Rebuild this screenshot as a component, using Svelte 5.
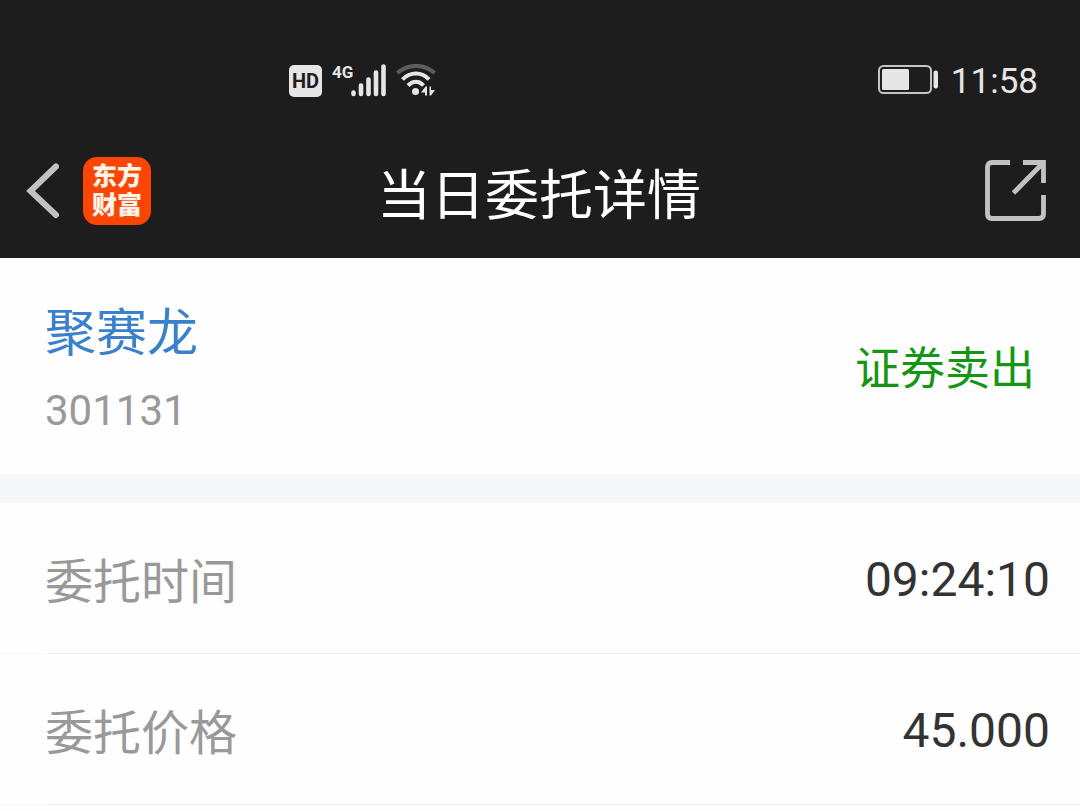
<script>
    let stock = { name: "聚赛龙", code: "301131", action: "证券卖出" };

    let rows = [
        { label: "委托时间", value: "09:24:10" },
        { label: "委托价格", value: "45.000" },
    ];
</script>

<svelte:head>
    <title>当日委托详情</title>
</svelte:head>

<header>
    <div class="status">
        <div class="signals">
            <span class="hd">HD</span>
            <span class="network">4G</span>
            <svg class="bars" width="36" height="34" viewBox="0 0 36 34" aria-hidden="true">
                <g stroke="#e6e6e6" stroke-width="4.600" stroke-linecap="round">
                    <path d="M2.500 28.500v1.500M10 21.500v8.500M17.500 15.500v14.500M25 8.500v21.500M32.500 2.500v27.500" />
                </g>
            </svg>
            <svg class="wifi" width="40" height="34" viewBox="0 0 40 34" aria-hidden="true">
                <g fill="none" stroke-width="4">
                    <path d="M1.500 9C12 -.5 28 -.5 38.500 9" stroke="#5c5c5c" />
                    <path d="M6.500 15.500C14 7.500 26 7.500 33 15.500" stroke="#e6e6e6" />
                    <path d="M12 21.500C17 16.500 23 16.500 27.500 21.500" stroke="#e6e6e6" />
                </g>
                <circle cx="19.500" cy="27.500" r="3.500" fill="#e6e6e6" />
                <path d="M25 28.500 29.500 22.500H31V31.500H29V28.500zM33.500 22.500H35V26H39L35 31.500H33.500z" fill="#e6e6e6" />
            </svg>
        </div>
        <div class="power">
            <svg width="62" height="32" viewBox="0 0 62 32" aria-hidden="true">
                <rect x="1" y="1" width="52" height="27" rx="4.500" fill="none" stroke="#c4c4c4" stroke-width="2" />
                <rect x="4" y="4" width="27" height="21" rx="1.500" fill="#e6e6e6" />
                <rect x="55.500" y="5.500" width="4.500" height="18" rx="2" fill="#e6e6e6" />
            </svg>
            <time>11:58</time>
        </div>
    </div>

    <nav>
        <div class="left">
            <button aria-label="返回">
                <svg width="34" height="56" viewBox="0 0 34 56" aria-hidden="true">
                    <path d="M31 3.500 5.500 28 31 52" fill="none" stroke="#c2c2c2" stroke-width="6" stroke-linecap="round" />
                </svg>
            </button>
            <span class="logo">东方<br />财富</span>
        </div>
        <h1>当日委托详情</h1>
        <button class="share" aria-label="分享">
            <svg width="62" height="62" viewBox="0 0 62 62" aria-hidden="true">
                <g fill="none" stroke="#c2c2c2" stroke-width="4.800">
                    <path d="M25 2.500H7Q2.500 2.500 2.500 7V54Q2.500 58.500 7 58.500H54Q58.500 58.500 58.500 54V35" />
                    <path d="M38 2.500H58.500V23M58 3 28.500 33" />
                </g>
            </svg>
        </button>
    </nav>
</header>

<main>
    <section class="stock">
        <div>
            <h2>{stock.name}</h2>
            <p class="code">{stock.code}</p>
        </div>
        <p class="action">{stock.action}</p>
    </section>

    <dl>
        {#each rows as row}
            <div class="row">
                <dt>{row.label}</dt>
                <dd>{row.value}</dd>
            </div>
        {/each}
    </dl>
</main>

<style>
    :global(body) {
        background: #fefefe;
        font-family: Roboto, "Noto Sans CJK SC", sans-serif;
    }

    h1, h2, p, dl, dd {
        margin: 0;
        font-weight: 400;
    }

    svg {
        display: block;
    }

    button {
        padding: 0;
        border: 0;
        background: none;
        cursor: pointer;
    }

    header {
        background: #1d1d1d;
        color: #fff;
    }

    .status {
        display: flex;
        align-items: center;
        justify-content: space-between;
        height: 86px;
        padding: 38px 42px 0 289px;
        color: #e6e6e6;
    }

    .signals, .power, .left {
        display: flex;
        align-items: center;
    }

    .hd {
        width: 33px;
        border-radius: 5px;
        background: #e6e6e6;
        color: #1d1d1d;
        font-size: 20px;
        font-weight: 700;
        line-height: 32px;
        text-align: center;
    }

    .network {
        align-self: flex-start;
        width: 19px;
        margin-left: 10px;
        font-size: 17px;
        font-weight: 700;
        line-height: 16px;
    }

    .wifi {
        margin-left: 9px;
    }

    .power {
        gap: 11px;
    }

    time {
        padding-top: 2px;
        font-size: 35px;
        line-height: 40px;
    }

    nav {
        display: grid;
        grid-template-columns: 1fr auto 1fr;
        align-items: center;
        height: 134px;
        padding: 0 33px 0 25px;
    }

    .left {
        gap: 24px;
    }

    .logo {
        padding: 5px 9px;
        border-radius: 14px;
        background: #fb4504;
        color: #fff4e8;
        font-size: 25px;
        font-weight: 900;
        line-height: 29px;
    }

    h1 {
        padding: 12px 0 0 6px;
        font-size: 54px;
        line-height: 64px;
    }

    .share {
        justify-self: end;
    }

    .stock {
        display: flex;
        align-items: center;
        justify-content: space-between;
        padding: 44px 45px 36px 45px;
        border-bottom: 29px solid #f6f7f9;
    }

    h2 {
        color: #3a80cc;
        font-size: 51px;
        line-height: 64px;
    }

    .code {
        margin-top: 21px;
        padding-bottom: 3px;
        color: #999;
        font-size: 42px;
        line-height: 48px;
    }

    .action {
        color: #149614;
        font-size: 45px;
        line-height: 64px;
    }

    .row {
        display: flex;
        align-items: center;
        justify-content: space-between;
        height: 150px;
        padding: 0 30px 0 45px;
        border-bottom: 1px solid;
        border-image: linear-gradient(to right, #f8f8f8 48px, #ececec 48px) 1;
        font-size: 48px;
    }

    dt {
        color: #999;
    }

    dd {
        padding-top: 2px;
        color: #333;
    }
</style>
